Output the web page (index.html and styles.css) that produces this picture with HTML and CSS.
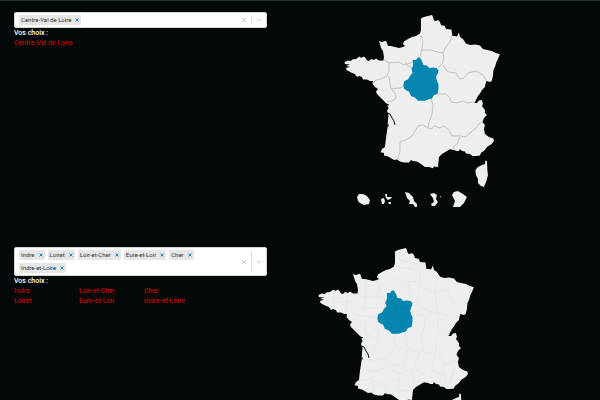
FILE: index.html
```
<!DOCTYPE html>
<html lang="fr">
<head>
<meta charset="utf-8">
<title>Vos choix</title>
<meta name="viewport" content="width=device-width, initial-scale=1">
<link rel="stylesheet" href="styles.css">
</head>
<body>
<svg class="defs" aria-hidden="true">
  <defs>
    <path id="mainland" d="M344.500 62L348 60.500 351 61 352 59.500 356 59 358 57.500 360 56.500 361 58 364 56.500 366 58.500 367 60.500 369 61 371 59 374 60 376 58.500 379 60.500 383.500 60.500 384 57 383 51 381 48 380 44 379 41 382 42 386 40.700 387 43 388 46 391 46 395 47 399 48 403 47 405 46 403 44 404 41.500 408 39 412 37 416 36 420 33.500 421 30 421 18.500 424 17 428 16 432 15 433 17 434 20.500 436 21 438 20 440 22 441 25 445 26 446 29 451.500 29.500 452 33 452.500 36 455 36 457 36.500 459 32.500 460 37 463 39 466 43.500 470 45 475 44.500 480 45.500 483 49 487 50 492 51 496 53 500 54.300 498 59 496.500 62 495 67 493.500 70 493 76 491.700 81 490 82 486.500 81 485.500 84 485 87 482 90 480 93.500 478 96 476 100 474.500 103 477 103 479 100.500 482 100 483 104 482 106 485 110 485 113 487 115 484 118 482.500 122 485 125 484 129 485 134 489 137 493.500 138.500 494 141 491.700 144 487 147 485 150 481 153 480 155.500 476 156 472.500 156 470 154 466 153.500 465 151.500 462 151 460 149 459 151 456.500 151 454 150 450 149.300 447 151 442 154 439 157 438.500 162 438 167 434 166.500 433 168.300 429 167 425 167 421 164 417 161.500 413 161 411 160 409 162.500 404 162.500 400 161.500 397 159.500 394 160 391.500 158.500 388 156.500 384 155.500 384 153 380.500 152.300 382 149 385 147 386 138 387.500 128 388 120 388.500 115 387 111 388.500 108 387 104 384 101 380 97 377 94 376 91.500 378 89 375 87 372.500 84 373 81 370 81 367 79.500 363 79.500 362 77 359 76 357 77 355 74 351 72.500 346.500 70 346 68 350 66.700 346 66 350 64.500 345 64Z"/>
    <path id="centre" d="M413 60L416 60 418 57.500 420 57.500 422 61 423.500 65 427 65.500 429 68 433 67.500 436.500 68 438.500 70 438 73 436 77 437 81 438.500 84 438.500 89 437.500 94 434 95 432 98.500 428 99.500 425 100.700 418 100.700 415 97.500 411 96 409 91.500 406.500 90.500 404 88.500 403.300 85 404.500 81 408 79.500 410 76 412.500 73 411.500 69 413 66Z"/>
    <path id="corsica" d="M485.500 160.500L487 161 487.500 171 488 175 486.500 181 484 187 481 186 478 183 478 179 476 175 475.500 170 478 167 482 165 485 164Z"/>
    <clipPath id="land-clip"><use href="#mainland"/></clipPath>
    <path id="gironde" fill="none" stroke="#030809" d="M387 113L390 114 392 118 394 121 395 125M386 104L389 105M388 124V127"/>
  </defs>
</svg>
<main class="page">
  <section class="row">
    <div class="picker">
      <div class="select">
        <ul class="chips">
          <li class="chip">Centre-Val de Loire<button aria-label="Retirer Centre-Val de Loire"><svg viewBox="0 0 4 4"><path d="M.5.5l3 3m0-3l-3 3"/></svg></button></li>
        </ul>
        <button class="clear" aria-label="Tout effacer"><svg viewBox="0 0 6 6"><path d="M1 1l4 4m0-4l-4 4"/></svg></button>
        <button class="open" aria-label="Ouvrir la liste"><svg viewBox="0 0 6 6"><path d="M1 2l2 2 2-2"/></svg></button>
      </div>
      <h2>Vos choix :</h2>
      <ul class="choices"><li>Centre-Val de Loire</li></ul>
    </div>
    <svg class="map regions" viewBox="344 14 157 196" role="img" aria-label="Carte des régions">
      <use href="#mainland"/><use href="#corsica"/>
      <g class="borders" clip-path="url(#land-clip)">
        <path d="M384 60L389 63 399 62 404 65 411 63 413 60M389 63L389 71 387 76 381 79 376 80 373 83M412 68L408 66 405 62M389 76L391 89 400 88 404 86M391 89L395 93 396 98 392 101 387 102M421 35L423 42 422 49 420 57M422 50L431 50 437 52 443 53M452 35L450 42 446 47 443 53 444 58 442 64 438 68M443 65L448 72 456 73 460 79 464 78 468 73 476 71 482 74 487 81M438 94L446 94 450 98 451 102 457 103 463 101 467 103 474 102M431 98L433 105 432 114 429 123 428 128M428 128L423 125 418 126 413 135 408 139 400 142 400 152 397 160M428 128L432 129 434 126 440 128 444 126 449 130 452 136 460 136 466 137 470 133 475 129 480 123 484 122M460 137L457 144 454 146 453 150"/>
      </g>
      <use href="#centre" class="selected"/><use href="#gironde"/>
      <path d="M357 197L359 194 363 194 367 196 370 200 369 204 364 205 360 203 358 201ZM381 199L384 198 385 201 384 204 382 204ZM385 194L387 194 387 197 391 197 392 198 388 200 386 198ZM388 202L391 202 391 204 389 204ZM405 192L409 193 413 197 414 201 417 204 417 207 415 207 413 204 409 204 410 201 407 198ZM430 194L434 193 437 195 436 199 438 202 435 206 432 206 431 204 434 202 433 198ZM440 196L441 196 440 198ZM454 192L458 191 463 194 467 197 464 203 460 207 453 207 455 201 452 195Z"/>
    </svg>
  </section>
  <section class="row">
    <div class="picker">
      <div class="select">
        <ul class="chips">
          <li class="chip">Indre<button aria-label="Retirer Indre"><svg viewBox="0 0 4 4"><path d="M.5.5l3 3m0-3l-3 3"/></svg></button></li>
          <li class="chip">Loiret<button aria-label="Retirer Loiret"><svg viewBox="0 0 4 4"><path d="M.5.5l3 3m0-3l-3 3"/></svg></button></li>
          <li class="chip">Loir-et-Cher<button aria-label="Retirer Loir-et-Cher"><svg viewBox="0 0 4 4"><path d="M.5.5l3 3m0-3l-3 3"/></svg></button></li>
          <li class="chip">Eure-et-Loir<button aria-label="Retirer Eure-et-Loir"><svg viewBox="0 0 4 4"><path d="M.5.5l3 3m0-3l-3 3"/></svg></button></li>
          <li class="chip">Cher<button aria-label="Retirer Cher"><svg viewBox="0 0 4 4"><path d="M.5.5l3 3m0-3l-3 3"/></svg></button></li>
          <li class="chip">Indre-et-Loire<button aria-label="Retirer Indre-et-Loire"><svg viewBox="0 0 4 4"><path d="M.5.5l3 3m0-3l-3 3"/></svg></button></li>
        </ul>
        <button class="clear" aria-label="Tout effacer"><svg viewBox="0 0 6 6"><path d="M1 1l4 4m0-4l-4 4"/></svg></button>
        <button class="open" aria-label="Ouvrir la liste"><svg viewBox="0 0 6 6"><path d="M1 2l2 2 2-2"/></svg></button>
      </div>
      <h2>Vos choix :</h2>
      <ul class="choices"><li>Indre</li><li>Loiret</li><li>Loir-et-Cher</li><li>Eure-et-Loir</li><li>Cher</li><li>Indre-et-Loire</li></ul>
    </div>
    <svg class="map departments" viewBox="344 14 157 196" role="img" aria-label="Carte des départements">
      <use href="#mainland"/><use href="#corsica"/>
      <g class="borders" clip-path="url(#land-clip)">
        <path d="M360 58l-1 9 2 11M359 68l14 1 11-3M373 61l0 21M384 60l5 4 12-1 10 2M391 47l1 17-3 12M403 47l3 10-4 7M389 76l12-1 11 1M378 80l10 3 14 2M390 87l2 14 12 4M403 90l3 16-9 13-8 3M421 25l15 5 14 2M421 34l14 1 12 4M421 45l12 4 12-1M434 49l2 16M446 39l0 14 14 7 13-4M463 42l-2 16 2 19M475 46l-1 14 6 13M445 58l-3 13 14 8 10-2M439 80l13 3 12-4 12 4M452 83l-3 17M464 80l0 17 12 3M421 101l0 14-10 10-14 3M431 99l3 16 12 4M447 101l2 18 12 3 2-20M421 115l13 2-4 16-14-1M446 119l-6 16 12 8M461 122l-4 15 12 6M477 107l-15 10 9 15 13-4M389 137l14 1 10-5 12 8 14-5M385 148l13-2 10 7 17-8M398 146l2 15M411 153l0 9M425 145l0 20M439 136l0 13 12 0M424 158l15-1M469 139l4 17M481 135l-6 17"/>
      </g>
      <use href="#centre" class="selected"/>
      <path class="seams" d="M411 70l9 1 3 6-3 7-10 2M423 75l14 1M420 84l8 3-1 12M423 65l-2 7"/>
      <use href="#gironde"/>
    </svg>
  </section>
</main>
</body>
</html>
```
FILE: styles.css
```
* { box-sizing: border-box; }
html { height: 100%; }
body {
  margin: 0;
  height: 100vh;
  overflow: hidden;
  background: #030809;
  color: #fff;
  border-top: 1px solid #293130;
  font: 400 7px/10px Roboto, "Liberation Sans", sans-serif;
}
ul { margin: 0; padding: 0; list-style: none; }
h2 { margin: 0; font-size: 7px; line-height: 10px; font-weight: 500; }
button { margin: 0; padding: 0; border: 0; background: none; display: flex; align-items: center; justify-content: center; }
svg { display: block; }
.defs { position: absolute; width: 0; height: 0; }
.page { padding: 11px 14px 0; }
.row {
  display: grid;
  grid-template-columns: 253fr 319fr;
  align-items: start;
  min-height: 235px;
}
.select {
  display: flex;
  min-height: 16px;
  background: #fff;
  border: 1px solid #d4d6d6;
  border-radius: 2px;
}
.chips { display: flex; flex-wrap: wrap; flex: 1; gap: 3px; padding: 2px 4px; align-items: center; }
.chip {
  display: flex;
  gap: 3px;
  padding: 0 1px 0 2px;
  background: #e6e6e6;
  border-radius: 1px;
  color: #333;
  font-size: 6px;
  line-height: 10px;
}
.chip button { width: 6px; }
.chip svg { width: 4px; height: 4px; fill: none; stroke: #1c86c4; stroke-width: 1; }
.clear, .open { width: 15px; flex: none; }
.clear svg, .open svg { width: 6px; height: 6px; fill: none; stroke: #ccc; stroke-width: 1; }
.open { position: relative; }
.open::before { content: ""; position: absolute; left: 0; top: 3px; bottom: 3px; width: 1px; background: #ddd; }
.choices {
  display: grid;
  grid-template-rows: repeat(2, 10px);
  grid-auto-flow: column;
  grid-auto-columns: 65px;
  color: #e00000;
  white-space: nowrap;
}
.map { width: 49.2%; fill: #eee; }
.regions { margin: 2px 0 0 24%; }
.departments { margin: 0 0 0 16%; }
.borders { fill: none; stroke: #c6c1bf; stroke-width: 1; stroke-linejoin: round; }
.departments .borders { stroke: #e7e7e7; }
.selected { fill: #0586b0; }
.seams { fill: none; stroke: #087fa7; stroke-width: 1; }
```
